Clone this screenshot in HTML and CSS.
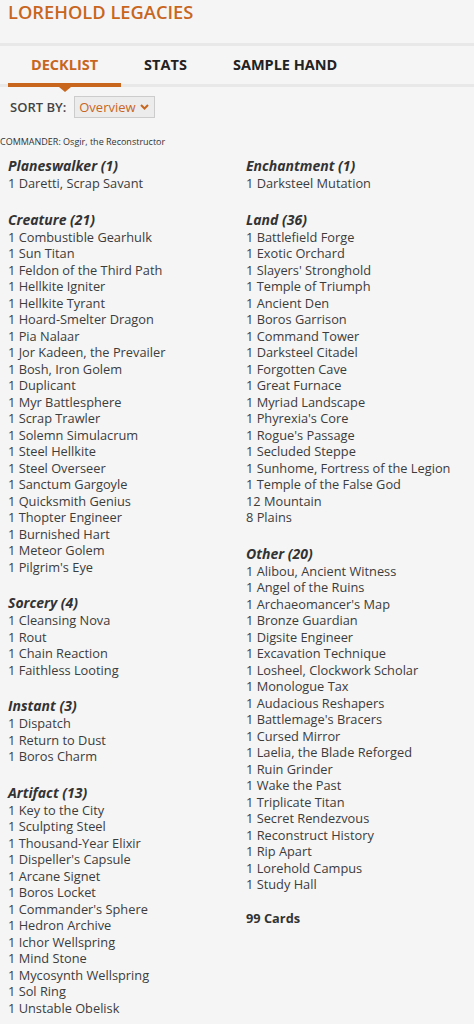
FILE: index.html
```html
<!DOCTYPE html>
<html lang="en">
<head>
  <meta charset="UTF-8" />
  <meta name="viewport" content="width=device-width, initial-scale=1.0" />
  <title>Lorehold Legacies - Decklist</title>
  <link rel="stylesheet" href="styles.css">
</head>
<body>
  <div class="page">
    <h1 class="deck-title">LOREHOLD LEGACIES</h1>

    <nav class="tabs">
      <a class="tab active">DECKLIST</a>
      <a class="tab">STATS</a>
      <a class="tab">SAMPLE HAND</a>
    </nav>

    <div class="sort-row">
      <label>SORT BY:</label>
      <span class="select">Overview
        <svg width="9" height="6" viewBox="0 0 9 6"><path d="M1 1l3.5 3.5L8 1" fill="none" stroke="#c8661e" stroke-width="2"/></svg>
      </span>
    </div>

    <p class="commander">COMMANDER: Osgir, the Reconstructor</p>

    <div class="decklist">
      <div class="col">
        <div class="section">
          <h3>Planeswalker (1)</h3>
          <ul>
            <li>1 Daretti, Scrap Savant</li>
          </ul>
        </div>
        <div class="section">
          <h3>Creature (21)</h3>
          <ul>
            <li>1 Combustible Gearhulk</li>
            <li>1 Sun Titan</li>
            <li>1 Feldon of the Third Path</li>
            <li>1 Hellkite Igniter</li>
            <li>1 Hellkite Tyrant</li>
            <li>1 Hoard-Smelter Dragon</li>
            <li>1 Pia Nalaar</li>
            <li>1 Jor Kadeen, the Prevailer</li>
            <li>1 Bosh, Iron Golem</li>
            <li>1 Duplicant</li>
            <li>1 Myr Battlesphere</li>
            <li>1 Scrap Trawler</li>
            <li>1 Solemn Simulacrum</li>
            <li>1 Steel Hellkite</li>
            <li>1 Steel Overseer</li>
            <li>1 Sanctum Gargoyle</li>
            <li>1 Quicksmith Genius</li>
            <li>1 Thopter Engineer</li>
            <li>1 Burnished Hart</li>
            <li>1 Meteor Golem</li>
            <li>1 Pilgrim's Eye</li>
          </ul>
        </div>
        <div class="section">
          <h3>Sorcery (4)</h3>
          <ul>
            <li>1 Cleansing Nova</li>
            <li>1 Rout</li>
            <li>1 Chain Reaction</li>
            <li>1 Faithless Looting</li>
          </ul>
        </div>
        <div class="section">
          <h3>Instant (3)</h3>
          <ul>
            <li>1 Dispatch</li>
            <li>1 Return to Dust</li>
            <li>1 Boros Charm</li>
          </ul>
        </div>
        <div class="section">
          <h3>Artifact (13)</h3>
          <ul>
            <li>1 Key to the City</li>
            <li>1 Sculpting Steel</li>
            <li>1 Thousand-Year Elixir</li>
            <li>1 Dispeller's Capsule</li>
            <li>1 Arcane Signet</li>
            <li>1 Boros Locket</li>
            <li>1 Commander's Sphere</li>
            <li>1 Hedron Archive</li>
            <li>1 Ichor Wellspring</li>
            <li>1 Mind Stone</li>
            <li>1 Mycosynth Wellspring</li>
            <li>1 Sol Ring</li>
            <li>1 Unstable Obelisk</li>
          </ul>
        </div>
      </div>

      <div class="col">
        <div class="section">
          <h3>Enchantment (1)</h3>
          <ul>
            <li>1 Darksteel Mutation</li>
          </ul>
        </div>
        <div class="section">
          <h3>Land (36)</h3>
          <ul>
            <li>1 Battlefield Forge</li>
            <li>1 Exotic Orchard</li>
            <li>1 Slayers' Stronghold</li>
            <li>1 Temple of Triumph</li>
            <li>1 Ancient Den</li>
            <li>1 Boros Garrison</li>
            <li>1 Command Tower</li>
            <li>1 Darksteel Citadel</li>
            <li>1 Forgotten Cave</li>
            <li>1 Great Furnace</li>
            <li>1 Myriad Landscape</li>
            <li>1 Phyrexia's Core</li>
            <li>1 Rogue's Passage</li>
            <li>1 Secluded Steppe</li>
            <li>1 Sunhome, Fortress of the Legion</li>
            <li>1 Temple of the False God</li>
            <li>12 Mountain</li>
            <li>8 Plains</li>
          </ul>
        </div>
        <div class="section">
          <h3>Other (20)</h3>
          <ul>
            <li>1 Alibou, Ancient Witness</li>
            <li>1 Angel of the Ruins</li>
            <li>1 Archaeomancer's Map</li>
            <li>1 Bronze Guardian</li>
            <li>1 Digsite Engineer</li>
            <li>1 Excavation Technique</li>
            <li>1 Losheel, Clockwork Scholar</li>
            <li>1 Monologue Tax</li>
            <li>1 Audacious Reshapers</li>
            <li>1 Battlemage's Bracers</li>
            <li>1 Cursed Mirror</li>
            <li>1 Laelia, the Blade Reforged</li>
            <li>1 Ruin Grinder</li>
            <li>1 Wake the Past</li>
            <li>1 Triplicate Titan</li>
            <li>1 Secret Rendezvous</li>
            <li>1 Reconstruct History</li>
            <li>1 Rip Apart</li>
            <li>1 Lorehold Campus</li>
            <li>1 Study Hall</li>
          </ul>
        </div>
        <p class="total">99 Cards</p>
      </div>
    </div>
  </div>
</body>
</html>
```

FILE: styles.css
```css
body {
  font-family: 'Open Sans', sans-serif;
  background-color: #f5f5f5;
  color: #3c3c3c;
  margin: 0;
}

.page {
  padding: 0 0 20px 0;
}

.deck-title {
  margin: 0;
  padding: 0 8px;
  font-size: 18.3px;
  font-weight: 600;
  line-height: 23px;
  color: #c8661e;
}

.tabs {
  display: flex;
  margin-top: 20px;
  padding-left: 8px;
  border-top: 3px solid #e8e8e8;
  border-bottom: 3px solid #e8e8e8;
  height: 38px;
}

.tab {
  position: relative;
  padding: 0 23px;
  font-size: 14.5px;
  font-weight: 700;
  line-height: 38px;
  color: #222;
}

.tab.active {
  color: #c8661e;
  border-bottom: 4px solid #c8661e;
  margin-bottom: -3px;
  line-height: 37px;
}

.tab.active::after {
  content: "";
  position: absolute;
  left: 50%;
  bottom: -9px;
  margin-left: -6px;
  border-left: 6px solid transparent;
  border-right: 6px solid transparent;
  border-top: 5px solid #c8661e;
}

.sort-row {
  display: flex;
  align-items: center;
  gap: 8px;
  padding: 9px 10px 0;
}

.sort-row label {
  font-size: 13px;
  font-weight: 600;
  color: #444;
}

.select {
  display: inline-flex;
  align-items: center;
  gap: 4px;
  height: 20px;
  padding: 0 5px 0 4px;
  border: 1px solid #ccc;
  background-color: #ececec;
  font-size: 13px;
  color: #c8661e;
}

.commander {
  margin: 18px 0 0;
  font-size: 9px;
  line-height: 12px;
  color: #333;
}

.decklist {
  display: grid;
  grid-template-columns: 238px 1fr;
  padding: 9px 0 0 8px;
}

.section {
  margin-bottom: 19px;
}

.section h3 {
  margin: 0;
  font-size: 14px;
  font-weight: 700;
  font-style: italic;
  line-height: 18px;
  color: #333;
}

.section ul {
  list-style: none;
  margin: 0;
  padding: 0;
}

.section li {
  font-size: 12.8px;
  line-height: 16.5px;
  color: #3c3c3c;
}

.total {
  margin: -3px 0 0;
  font-size: 12.8px;
  font-weight: 700;
  line-height: 18px;
  color: #333;
}
```
